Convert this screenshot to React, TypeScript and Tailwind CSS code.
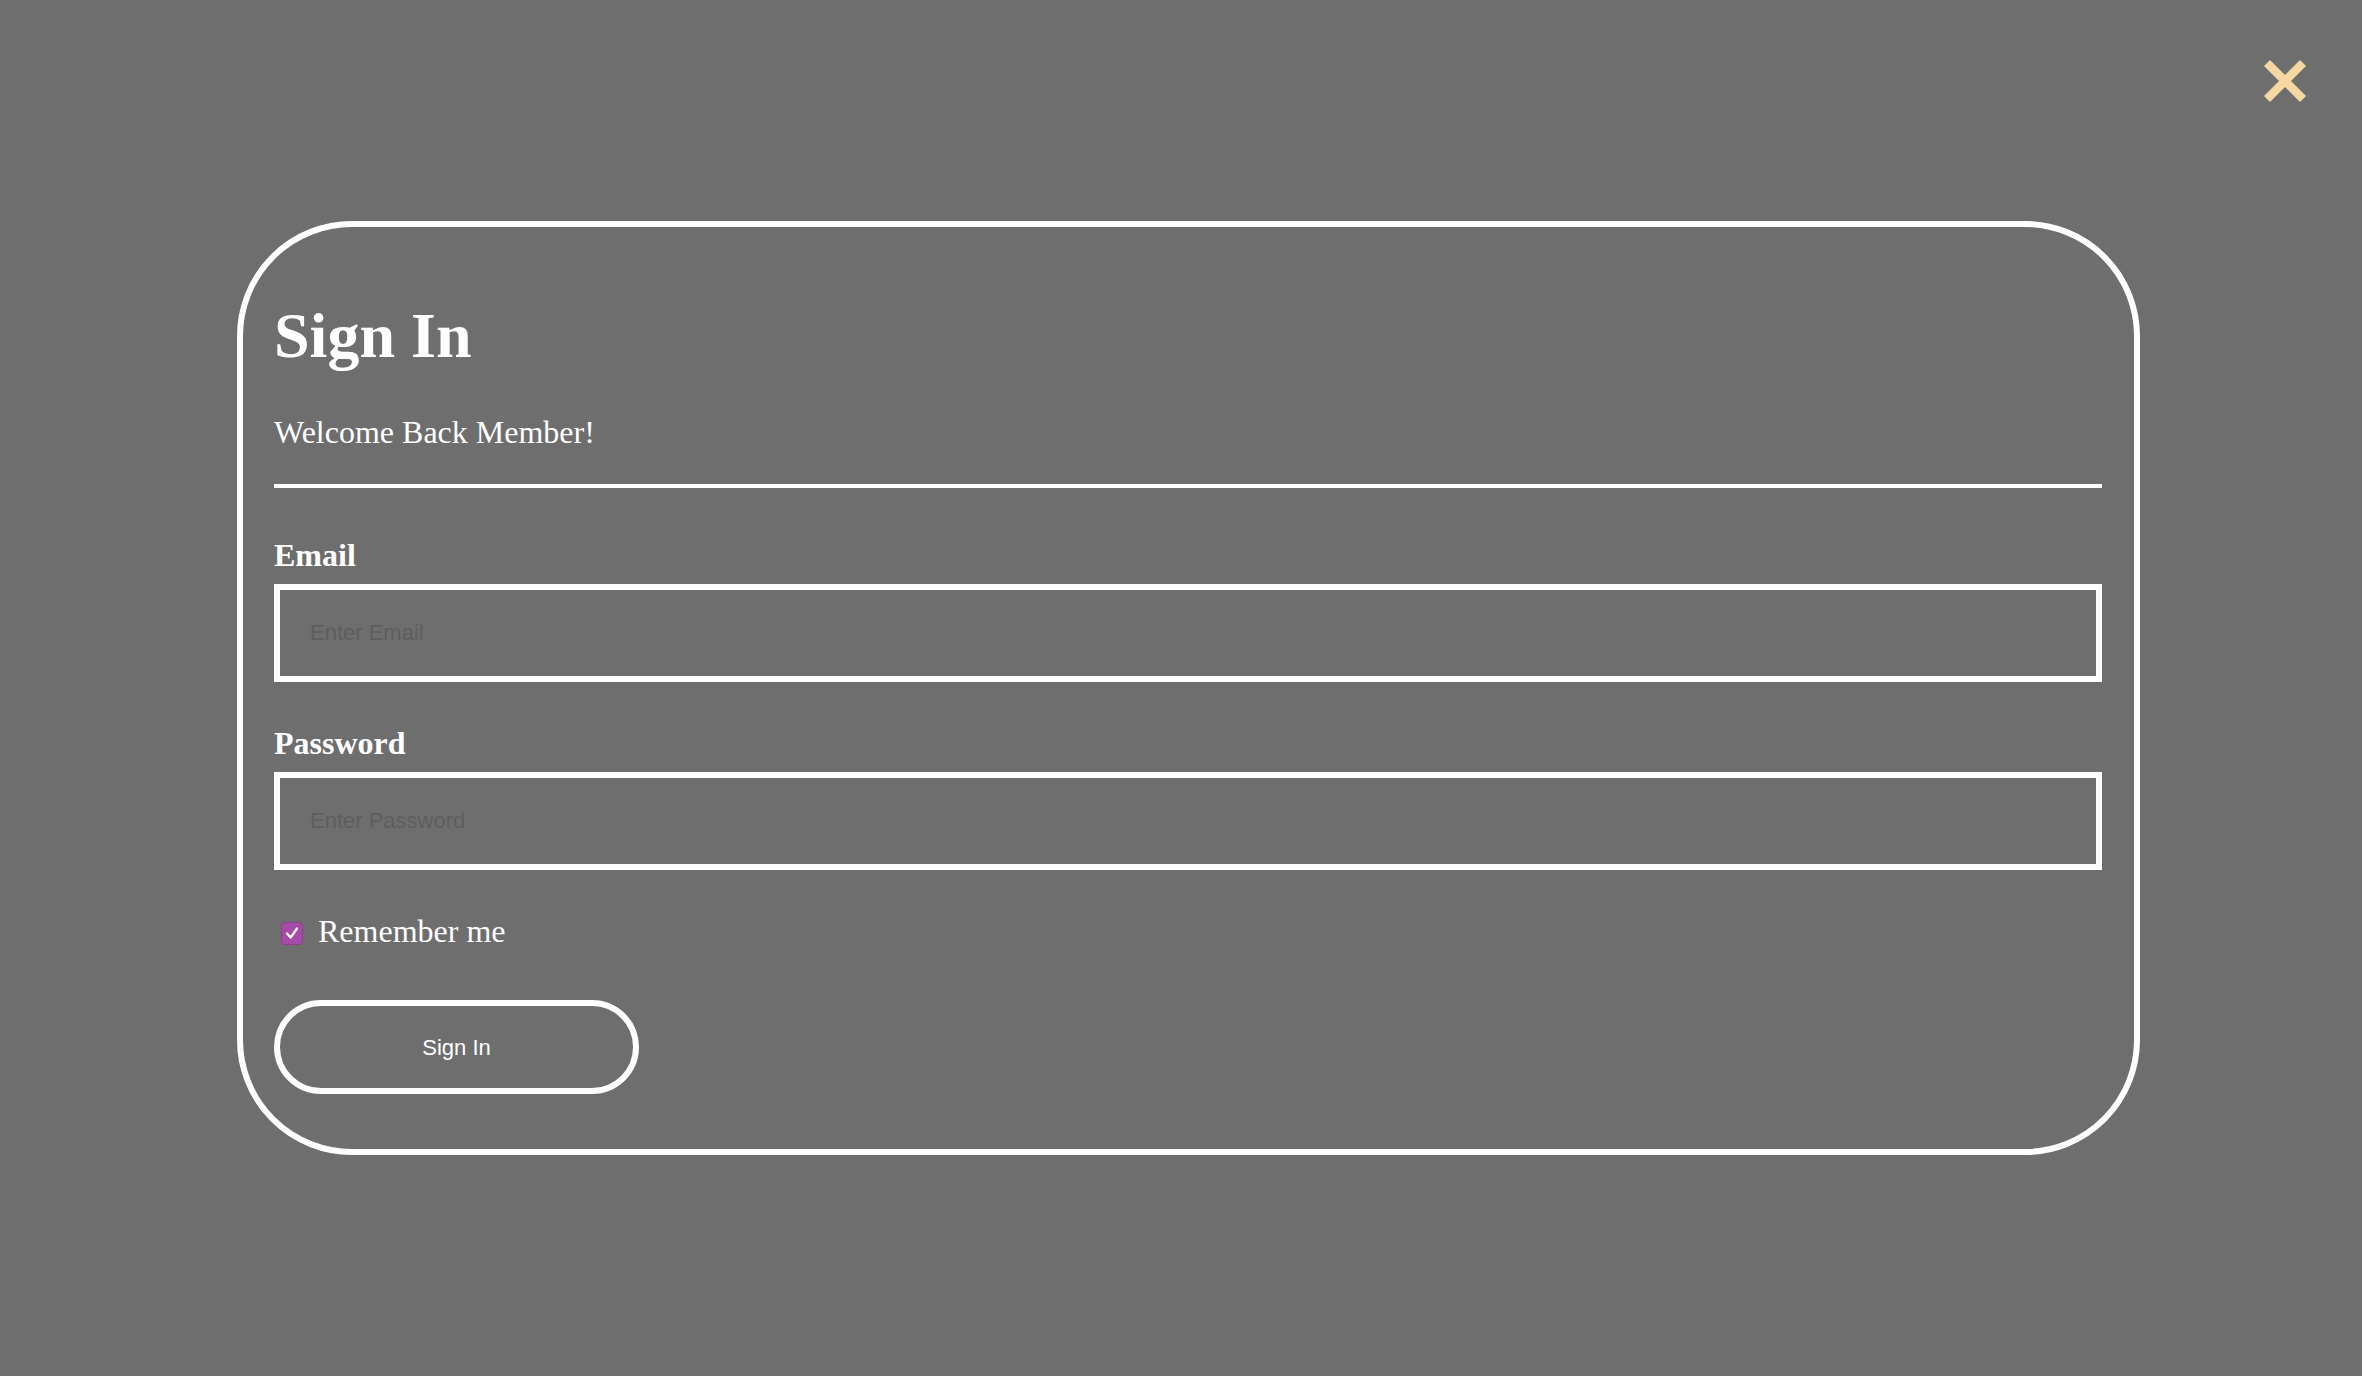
import React from 'react';

const serif = { fontFamily: '"Liberation Serif", "Times New Roman", serif' };

export default function App() {
	return (
		<div className="relative min-h-screen w-full bg-[#6e6e6e] font-['Liberation_Serif',serif] overflow-hidden">
			{/* close */}
			<button className="absolute left-[2264px] top-[60px] w-[42px] h-[42px]" aria-label="Close">
				<svg width="42" height="42" viewBox="0 0 42 42">
					<line x1="3" y1="3" x2="39" y2="39" stroke="#f4d7a1" strokeWidth="8.5" />
					<line x1="39" y1="3" x2="3" y2="39" stroke="#f4d7a1" strokeWidth="8.5" />
				</svg>
			</button>

			<div className="ml-[237px] mt-[221px] w-[1903px] rounded-[115px] border-[6px] border-white pl-[31px] pr-[32px] pt-[77px] pb-[55px] flex flex-col text-white">
				<h1 className="text-[64px] leading-[64px] font-bold">Sign In</h1>
				<p className="mt-[48px] text-[32px] leading-[32px]">Welcome Back Member!</p>
				<div className="mt-[36px] h-[4px] w-full bg-white" />

				<label className="mt-[51px] text-[32px] leading-[32px] font-bold">Email</label>
				<input
					type="email"
					placeholder="Enter Email"
					className="mt-[13px] h-[98px] w-full border-[6px] border-white bg-transparent pl-[30px] font-['Liberation_Sans',Arial,sans-serif] text-[22px] text-white outline-none placeholder:text-[#5e5e5e]"
				/>

				<label className="mt-[45px] text-[32px] leading-[32px] font-bold">Password</label>
				<input
					type="password"
					placeholder="Enter Password"
					className="mt-[13px] h-[98px] w-full border-[6px] border-white bg-transparent pl-[30px] font-['Liberation_Sans',Arial,sans-serif] text-[22px] text-white outline-none placeholder:text-[#5e5e5e]"
				/>

				<div className="mt-[45px] flex items-start h-[32px]">
					<span className="ml-[7px] mt-[7px] w-[22px] h-[23px] rounded-[4px] bg-[#a64ba6] border border-[#923c92] flex items-center justify-center">
						<svg width="22" height="23" viewBox="0 0 22 23">
							<path d="M5.5 11.5 L9.5 16 L16.5 6" fill="none" stroke="white" strokeWidth="2.4" strokeLinecap="round" strokeLinejoin="round" />
						</svg>
					</span>
					<span className="ml-[15px] text-[32px] leading-[32px]" style={serif}>Remember me</span>
				</div>

				<button className="mt-[53px] w-[365px] h-[94px] rounded-full border-[6px] border-white bg-transparent text-white text-[22px] font-['Liberation_Sans',Arial,sans-serif]">
					Sign In
				</button>
			</div>
		</div>
	);
}
